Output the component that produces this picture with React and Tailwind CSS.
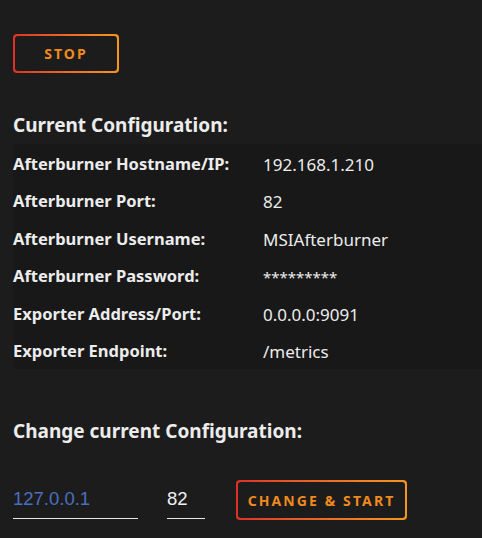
import { useState } from 'react'

const filas = [
  ['Afterburner Hostname/IP:', '192.168.1.210'],
  ['Afterburner Port:', '82'],
  ['Afterburner Username:', 'MSIAfterburner'],
  ['Afterburner Password:', '*********'],
  ['Exporter Address/Port:', '0.0.0.0:9091'],
  ['Exporter Endpoint:', '/metrics'],
]

function BotaoGradiente({ children, className }) {
  return (
    <button className={`p-[2px] rounded-[4px] bg-gradient-to-r from-[#de2f28] to-[#f7961f] ${className}`}>
      <span className="flex h-full w-full items-center justify-center rounded-[3px] bg-[#1c1c1c] text-[14px] font-bold tracking-[0.15em] text-[#f08a1c]">
        {children}
      </span>
    </button>
  )
}

export default function App() {
  const [host, setHost] = useState('127.0.0.1')
  const [porta, setPorta] = useState('82')

  return (
    <div className="min-h-[538px] w-full bg-[#1c1c1c] pt-[34px] pl-[13px] font-['Noto_Sans',sans-serif] text-[#ececec]">
      <BotaoGradiente className="h-[39px] w-[106px]">STOP</BotaoGradiente>

      <h2 className="mt-[40px] mb-[7px] text-[19px] font-bold leading-6">Current Configuration:</h2>

      <div className="bg-[#181818]">
        {filas.map(([rotulo, valor]) => (
          <div key={rotulo} className="flex h-[37.5px] items-center pt-[3px]">
            <span className="w-[250px] text-[16.5px] font-bold">{rotulo}</span>
            <span className={valor.startsWith('*') ? 'text-[15px]' : 'text-[17px]'}>{valor}</span>
          </div>
        ))}
      </div>

      <h2 className="mt-[50px] text-[19px] font-bold leading-6">Change current Configuration:</h2>

      <div className="mt-[37px] flex items-end">
        <input
          value={host}
          onChange={e => setHost(e.target.value)}
          className="mb-[1px] w-[125px] border-b border-[#e8e8e8] bg-transparent pb-[8px] font-['Liberation_Sans',sans-serif] text-[18.5px] leading-[22px] text-[#4a6fc0] outline-none"
        />
        <input
          value={porta}
          onChange={e => setPorta(e.target.value)}
          className="mb-[1px] ml-[29px] w-[38px] border-b border-[#e8e8e8] bg-transparent pb-[8px] font-['Liberation_Sans',sans-serif] text-[18.5px] leading-[22px] text-[#f0f0f0] outline-none"
        />
        <BotaoGradiente className="ml-[31px] h-[40px] w-[171px]">CHANGE &amp; START</BotaoGradiente>
      </div>
    </div>
  )
}
